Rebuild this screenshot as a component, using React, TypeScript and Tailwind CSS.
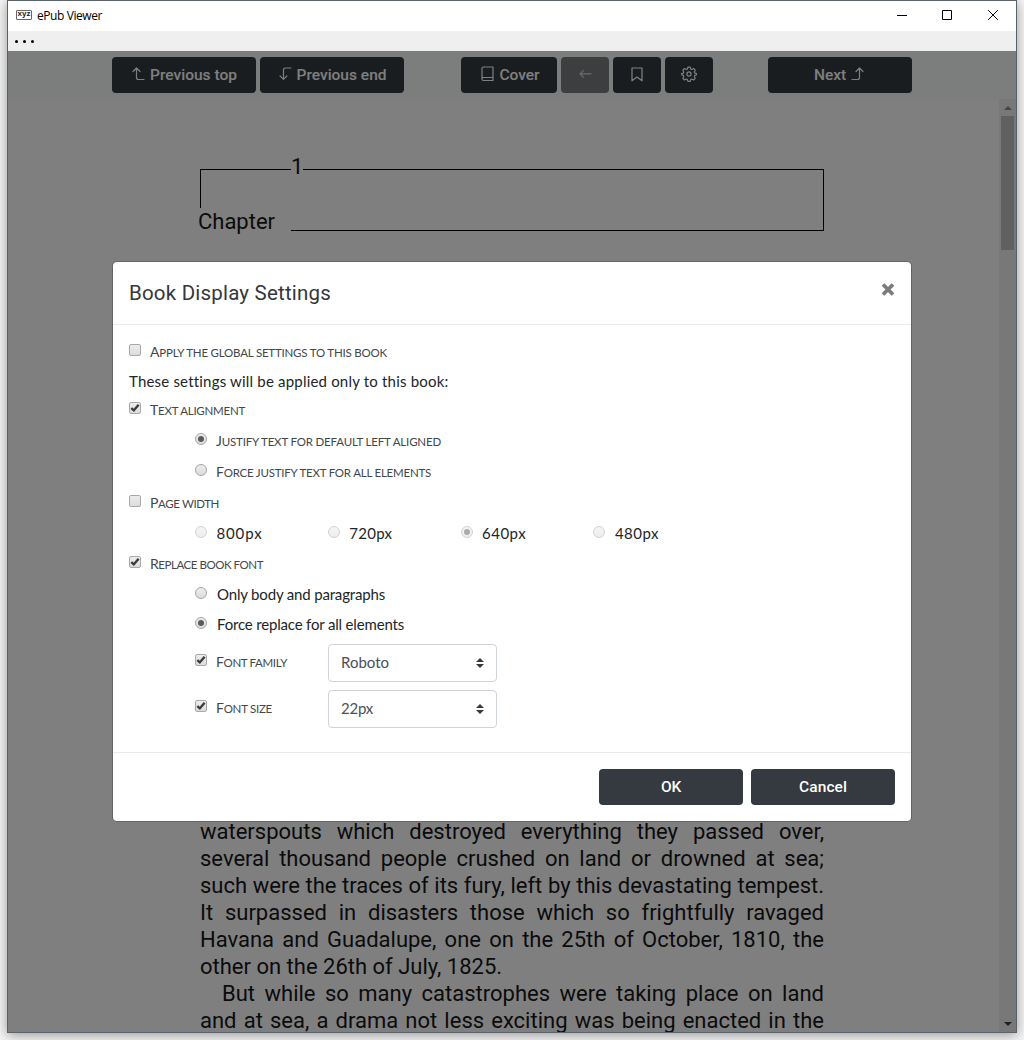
import React, { useLayoutEffect, useRef, useState } from "react";

/* Text set to a fixed measure: the letter spacing is worked out from the natural width. */
function Fit({ w, className = "", children }: { w: number; className?: string; children: string }) {
  const ref = useRef<HTMLSpanElement>(null);
  const [ls, setLs] = useState(0);
  useLayoutEffect(() => {
    if (ref.current) setLs((w - ref.current.getBoundingClientRect().width) / children.length);
  }, []);
  return (
    <span ref={ref} className={"inline-block whitespace-nowrap " + className} style={{ letterSpacing: ls }}>
      {children}
    </span>
  );
}

function Caps({ w, className = "", children }: { w: number; className?: string; children: string }) {
  return (
    <Fit w={w} className={"font-[Lato,sans-serif] font-normal text-[11.5px] leading-[18px] uppercase text-[#43474b] first-letter:text-[14px] " + className}>
      {children}
    </Fit>
  );
}

function Body({ w, className = "", children }: { w: number; className?: string; children: string }) {
  return <Fit w={w} className={"font-[Lato,sans-serif] text-[15px] leading-[20px] text-[#212529] " + className}>{children}</Fit>;
}

function Check({ on = false }: { on?: boolean }) {
  return (
    <span className="flex h-3 w-3 shrink-0 items-center justify-center rounded-[2px] border border-[#a9a9a9] bg-linear-to-b from-[#ededed] to-[#dcdcdc]">
      {on && (
        <svg width="10" height="10" viewBox="0 0 10 10" fill="none" stroke="#3c3c3c" strokeWidth="2.4">
          <path d="M1.3 5.2 3.8 7.4 8.6 1.7" />
        </svg>
      )}
    </span>
  );
}

function Radio({ on = false, dim = false }: { on?: boolean; dim?: boolean }) {
  return (
    <span className={"flex h-3 w-3 shrink-0 items-center justify-center rounded-full border border-[#a6a6a6] bg-linear-to-b from-[#ededed] to-[#dcdcdc] " + (dim ? "opacity-50" : "")}>
      {on && <span className="h-1.5 w-1.5 rounded-full bg-[#5a5a5a]" />}
    </span>
  );
}

function Select({ w, children }: { w: number; children: string }) {
  return (
    <div className="flex h-[38px] w-[169px] items-center justify-between rounded border border-[#ced4da] bg-white pr-3 pl-3">
      <Fit w={w} className="-mt-[2px] font-[Lato,sans-serif] text-[15px] leading-[20px] text-[#495057]">{children}</Fit>
      <svg width="8" height="10" viewBox="0 0 4 5" fill="#343a40"><path d="M2 0 0 2h4zm0 5L0 3h4z" /></svg>
    </div>
  );
}

const stroke = { fill: "none", stroke: "currentColor", strokeWidth: 1.2, strokeLinecap: "round", strokeLinejoin: "round" } as const;

function Button({ className, children }: { className: string; children: React.ReactNode }) {
  return (
    <div className={"flex h-9 items-center justify-center rounded bg-[#343a40] font-[Roboto,sans-serif] text-[15.5px] leading-[18px] font-medium text-white " + className}>
      {children}
    </div>
  );
}

const lines = [
  "waterspouts which destroyed everything they passed over,",
  "several thousand people crushed on land or drowned at sea;",
  "such were the traces of its fury, left by this devastating tempest.",
  "It surpassed in disasters those which so frightfully ravaged",
  "Havana and Guadalupe, one on the 25th of October, 1810, the",
];

const row = "flex items-center ";

export default function App() {
  return (
    <div className="h-[1040px] w-[1024px] overflow-hidden bg-[#f6f6f6] pl-[7px]">
      <div className="flex h-[1033px] w-[1010px] flex-col border border-[#5a636b] bg-white shadow-[0_2px_12px_rgba(0,0,0,0.4)]">
        <div className="flex h-[30px] shrink-0 items-center bg-white pl-2">
          <div className="-mt-[2px] flex h-[10px] w-4 items-center justify-center rounded-[1px] border border-[#666] font-[Liberation_Sans,sans-serif] text-[8px] leading-none font-bold text-[#222]">
            <span className="-mt-[3px]">xyz</span>
          </div>
          <Fit w={65} className="ml-[5px] font-[Open_Sans,sans-serif] text-[12px] text-black">ePub Viewer</Fit>
          <svg className="-mt-[2px] mr-[17px] ml-auto" width="104" height="12" viewBox="0 0 104 12" fill="none" stroke="#000">
            <path d="M2 6.5h10M47.5 1.5h9v9h-9zM93.2 1.2l9.6 9.6M102.8 1.2l-9.6 9.6" />
          </svg>
        </div>
        <div className="flex h-5 shrink-0 items-center gap-[5px] bg-[#efefef] pl-[7px]">
          <span className="h-[3px] w-[3px] rounded-full bg-black" />
          <span className="h-[3px] w-[3px] rounded-full bg-black" />
          <span className="h-[3px] w-[3px] rounded-full bg-black" />
        </div>

        <div className="relative flex h-[981px] flex-col overflow-hidden">
          <div className="flex h-12 shrink-0 items-center justify-center bg-[#f8fdfa]">
            <div className="flex w-[800px]">
              <Button className="w-36 gap-[5px] pl-px">
                <svg className="-mt-[2px]" width="13" height="14" viewBox="0 0 13 14" {...stroke}><path d="M1 4.5 4.5 1 8 4.5M4.5 1v9.5q0 2 2 2H12" /></svg>
                <Fit w={87}>Previous top</Fit>
              </Button>
              <Button className="ml-1 w-36 gap-[5px] pl-px">
                <svg className="-mt-[2px]" width="13" height="14" viewBox="0 0 13 14" {...stroke}><path d="M1 8.8 4.5 12.3 8 8.8M4.5 12.3V3q0-2 2-2H12" /></svg>
                <Fit w={90}>Previous end</Fit>
              </Button>
              <Button className="ml-[57px] w-24 gap-[6px] pl-[2px]">
                <svg className="-mt-[2px]" width="13" height="16" viewBox="0 0 13 16" {...stroke}><path d="M2.5 1h9.5v13.5H2.5Q1 14.5 1 13V2.5Q1 1 2.5 1ZM1 13q0-1.5 1.5-1.5H12" /></svg>
                <Fit w={40}>Cover</Fit>
              </Button>
              <Button className="ml-1 w-12 bg-[#7b7d7f]! pb-[2px] text-white/70!">
                <svg width="13" height="10" viewBox="0 0 13 10" {...stroke}><path d="M4.5 1.3 1 4.8l3.5 3.5M1 4.8h11" /></svg>
              </Button>
              <Button className="ml-1 w-12 pb-[2px]">
                <svg width="12" height="15" viewBox="0 0 12 15" {...stroke}><path d="M1 1h10v12.8L6 10l-5 3.8z" /></svg>
              </Button>
              <Button className="ml-1 w-12 pb-[2px]">
                <svg width="16" height="16" viewBox="0 0 16 16" {...stroke}>
                  <circle cx="8" cy="8" r="2.1" />
                  <path d="M6.8 1h2.4l.5 2 1.2.5 1.8-1 1.7 1.7-1 1.8.5 1.2 2 .5v1.2l-2 .7-.5 1.2 1 1.8-1.7 1.7-1.8-1-1.2.5-.5 1.9H6.8l-.5-1.9-1.2-.5-1.8 1-1.7-1.7 1-1.8-.5-1.2-1.8-.7V7.7l1.8-.5.5-1.2-1-1.8 1.7-1.7 1.8 1L6.3 3z" transform="translate(.3 .1) scale(.97)" />
                </svg>
              </Button>
              <Button className="ml-[55px] w-36 gap-[5px] pr-[2px]">
                <Fit w={32}>Next</Fit>
                <svg className="-mt-[2px]" width="13" height="14" viewBox="0 0 13 14" {...stroke}><path d="M5 4.5 8.5 1 12 4.5M8.5 1v9.5q0 2-2 2H1" /></svg>
              </Button>
            </div>
          </div>

          <div className="flex min-h-0 flex-1">
            <div className="flex-1 overflow-hidden pt-[55px] pl-[190px] font-[Roboto,sans-serif] text-[22px] leading-[27px] text-[#161616]">
              <div className="flex h-[77px]">
                <div className="w-[93px] pl-[2px]">
                  <div className="mt-[15px] h-[39px] border-t border-l border-black" />
                  <Fit w={77} className="-ml-[2px]">Chapter</Fit>
                </div>
                <div className="w-3 leading-[26px]">
                  <div className="h-[76px]">1</div>
                  <div className="h-px bg-black" />
                </div>
                <div className="mt-[15px] h-[62px] w-[521px] border-t border-r border-b border-black" />
              </div>
              <div className="mt-[587px] ml-[2px] w-[624px]">
                {lines.map((t) => (
                  <div key={t} className="whitespace-nowrap [text-align-last:justify]">{t}</div>
                ))}
                <div>other on the 26th of July, 1825.</div>
                <div className="pl-[22px] whitespace-nowrap [text-align-last:justify]">But while so many catastrophes were taking place on land</div>
                <div className="whitespace-nowrap [text-align-last:justify]">and at sea, a drama not less exciting was being enacted in the</div>
              </div>
            </div>
            <div className="flex w-[17px] flex-col items-center bg-[#f1f1f1]">
              <div className="flex h-[17px] items-center"><svg width="8" height="4" viewBox="0 0 8 4" fill="#8a8a8a"><path d="M0 4 4 0l4 4z" /></svg></div>
              <div className="h-[134px] w-[13px] bg-[#c1c1c1]" />
              <div className="mt-auto flex h-[17px] items-center"><svg width="8" height="4" viewBox="0 0 8 4" fill="#404040"><path d="M0 0h8L4 4z" /></svg></div>
            </div>
          </div>

          <div className="absolute inset-0 flex items-start justify-center bg-black/50 pt-[210px]">
            <div className="flex h-[561px] w-[800px] flex-col rounded-[5px] border border-black/20 bg-white bg-clip-padding">
              <div className="flex h-[63px] shrink-0 items-center justify-between border-b border-[#e9ecef] px-4">
                <Fit w={202} className="font-[Roboto,sans-serif] text-[20.5px] leading-6 text-[#33373b]">Book Display Settings</Fit>
                <svg className="mt-[-8px]" width="14" height="13" viewBox="0 0 14 13" stroke="#7a7a7a" strokeWidth="3.6"><path d="M2 1.5 12 11.5M12 1.5 2 11.5" /></svg>
              </div>
              <div className="flex flex-1 flex-col pt-3 pl-4">
                <div className={row + "h-[30px] gap-[9px]"}><span className="mb-1"><Check /></span><Caps w={237}>Apply the global settings to this book</Caps></div>
                <div className={row + "h-[29px]"}><Body w={319} className="-mt-[2px]">These settings will be applied only to this book:</Body></div>
                <div className={row + "h-[29px] gap-[9px]"}><span className="mb-[5px]"><Check on /></span><Caps w={95}>Text alignment</Caps></div>
                <div className={row + "h-[31px] gap-[9px] pl-[66px]"}><span className="mb-[3px]"><Radio on /></span><Caps w={225} className="mt-[2px]">Justify text for default left aligned</Caps></div>
                <div className={row + "h-[31px] gap-[9px] pl-[66px]"}><span className="mb-[3px]"><Radio /></span><Caps w={215} className="mt-[2px]">Force justify text for all elements</Caps></div>
                <div className={row + "h-[31px] gap-[9px]"}><span className="mb-[3px]"><Check /></span><Caps w={69} className="mt-[2px]">Page width</Caps></div>
                <div className={row + "h-[31px] pl-[66px]"}>
                  {[["800px", 46], ["720px", 43], ["640px", 44], ["480px", 44]].map(([t, w]) => (
                    <div key={t} className="flex w-[132.8px] items-center gap-[9.5px]">
                      <span className="mb-[3px]"><Radio dim on={t === "640px"} /></span>
                      <Body w={w as number} className="-mt-[2px]">{t as string}</Body>
                    </div>
                  ))}
                </div>
                <div className={row + "h-[30px] gap-[9px]"}><span className="mb-1"><Check on /></span><Caps w={113}>Replace book font</Caps></div>
                <div className={row + "h-[30px] gap-[10px] pl-[66px]"}><span className="mb-[2px]"><Radio /></span><Body w={168}>Only body and paragraphs</Body></div>
                <div className={row + "h-[30px] gap-[10px] pl-[66px]"}><span className="mb-[2px]"><Radio on /></span><Body w={187}>Force replace for all elements</Body></div>
                <div className={row + "mt-[5px] h-[38px] pl-[66px]"}>
                  <div className="flex w-[133px] items-center gap-[9px]"><span className="mb-[6px]"><Check on /></span><Caps w={71} className="-mt-[2px]">Font family</Caps></div>
                  <Select w={48}>Roboto</Select>
                </div>
                <div className={row + "mt-2 h-[38px] pl-[66px]"}>
                  <div className="flex w-[133px] items-center gap-[9px]"><span className="mb-[6px]"><Check on /></span><Caps w={56} className="-mt-[2px]">Font size</Caps></div>
                  <Select w={32}>22px</Select>
                </div>
              </div>
              <div className="flex h-[69px] shrink-0 items-start justify-end gap-2 border-t border-[#e9ecef] px-4 pt-4">
                <Button className="w-36"><Fit w={20}>OK</Fit></Button>
                <Button className="w-36"><Fit w={48}>Cancel</Fit></Button>
              </div>
            </div>
          </div>
        </div>
      </div>
    </div>
  );
}
